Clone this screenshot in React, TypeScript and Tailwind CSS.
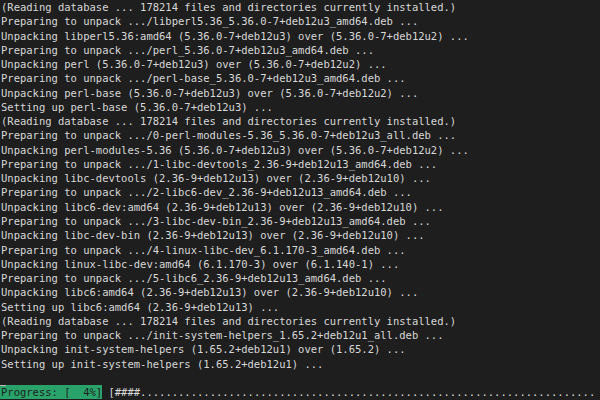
const lines = [
  "(Reading database ... 178214 files and directories currently installed.)",
  "Preparing to unpack .../libperl5.36_5.36.0-7+deb12u3_amd64.deb ...",
  "Unpacking libperl5.36:amd64 (5.36.0-7+deb12u3) over (5.36.0-7+deb12u2) ...",
  "Preparing to unpack .../perl_5.36.0-7+deb12u3_amd64.deb ...",
  "Unpacking perl (5.36.0-7+deb12u3) over (5.36.0-7+deb12u2) ...",
  "Preparing to unpack .../perl-base_5.36.0-7+deb12u3_amd64.deb ...",
  "Unpacking perl-base (5.36.0-7+deb12u3) over (5.36.0-7+deb12u2) ...",
  "Setting up perl-base (5.36.0-7+deb12u3) ...",
  "(Reading database ... 178214 files and directories currently installed.)",
  "Preparing to unpack .../0-perl-modules-5.36_5.36.0-7+deb12u3_all.deb ...",
  "Unpacking perl-modules-5.36 (5.36.0-7+deb12u3) over (5.36.0-7+deb12u2) ...",
  "Preparing to unpack .../1-libc-devtools_2.36-9+deb12u13_amd64.deb ...",
  "Unpacking libc-devtools (2.36-9+deb12u13) over (2.36-9+deb12u10) ...",
  "Preparing to unpack .../2-libc6-dev_2.36-9+deb12u13_amd64.deb ...",
  "Unpacking libc6-dev:amd64 (2.36-9+deb12u13) over (2.36-9+deb12u10) ...",
  "Preparing to unpack .../3-libc-dev-bin_2.36-9+deb12u13_amd64.deb ...",
  "Unpacking libc-dev-bin (2.36-9+deb12u13) over (2.36-9+deb12u10) ...",
  "Preparing to unpack .../4-linux-libc-dev_6.1.170-3_amd64.deb ...",
  "Unpacking linux-libc-dev:amd64 (6.1.170-3) over (6.1.140-1) ...",
  "Preparing to unpack .../5-libc6_2.36-9+deb12u13_amd64.deb ...",
  "Unpacking libc6:amd64 (2.36-9+deb12u13) over (2.36-9+deb12u10) ...",
  "Setting up libc6:amd64 (2.36-9+deb12u13) ...",
  "(Reading database ... 178214 files and directories currently installed.)",
  "Preparing to unpack .../init-system-helpers_1.65.2+deb12u1_all.deb ...",
  "Unpacking init-system-helpers (1.65.2+deb12u1) over (1.65.2) ...",
  "Setting up init-system-helpers (1.65.2+deb12u1) ...",
  "",
];

export default function App() {
  return (
    <main className="h-[400px] w-[600px] overflow-hidden bg-[#1e1e1e] font-['DejaVu_Sans_Mono',monospace] text-[10.5px] leading-[14.28px] text-[#d8d8d8]">
      {/* TERMINAL OUTPUT */}
      <div className="flex flex-col pl-px">
        {lines.map((line, i) => (
          <div key={i} className="h-[14.28px] whitespace-pre">
            {line}
          </div>
        ))}
      </div>

      {/* PROGRESS BAR */}
      <div className="relative flex h-[14.28px] whitespace-pre">
        <span className="absolute left-0 top-0 h-px w-[6px] bg-[#bdbdbd]" />
        <span className="bg-[#2aa36b] pl-px text-[#1e1e1e]">Progress: [  4%]</span>
        <span> [####{".".repeat(72)}</span>
      </div>
    </main>
  );
}
